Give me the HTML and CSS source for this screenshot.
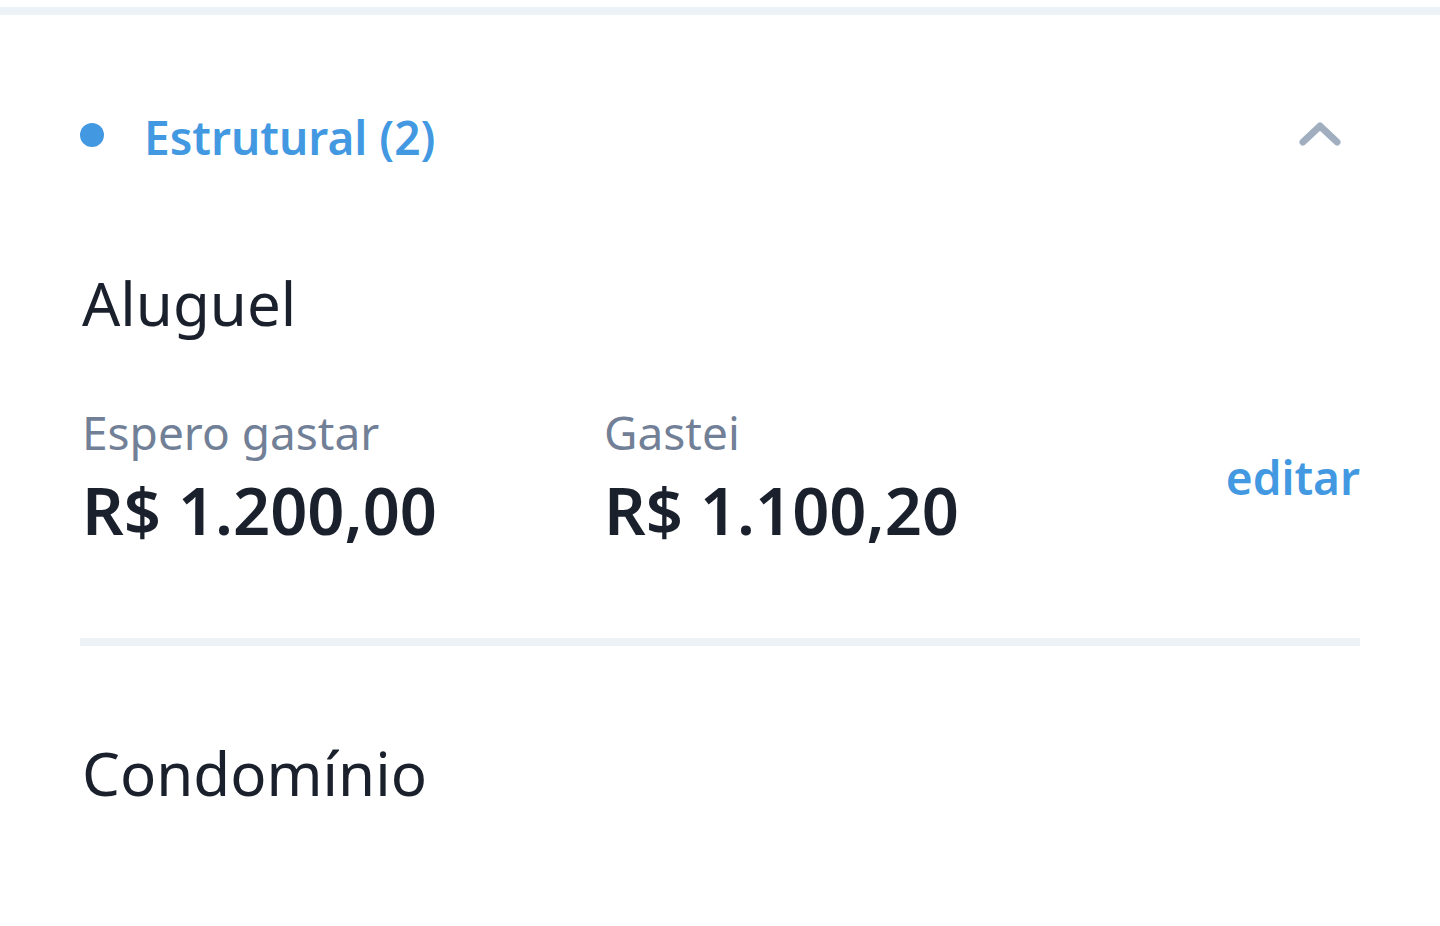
FILE: index.html
```html
<!DOCTYPE html>
<html lang="pt-BR">
<head>
<meta charset="utf-8">
<link rel="stylesheet" href="styles.css">
</head>
<body>
<div class="topbar"></div>
<section class="group">
  <div class="group-head">
    <span class="dot"></span>
    <span class="group-title">Estrutural (2)</span>
    <svg class="chevron" width="44" height="28" viewBox="0 0 44 28"><path d="M5 22 L22 6 L39 22" fill="none" stroke="#a0aec0" stroke-width="7" stroke-linecap="round" stroke-linejoin="round"/></svg>
  </div>
  <div class="item">
    <div class="item-name">Aluguel</div>
    <div class="item-values">
      <div class="val">
        <div class="val-label">Espero gastar</div>
        <div class="val-num">R$ 1.200,00</div>
      </div>
      <div class="val">
        <div class="val-label">Gastei</div>
        <div class="val-num">R$ 1.100,20</div>
      </div>
      <a class="edit">editar</a>
    </div>
  </div>
  <div class="divider"></div>
  <div class="item item-next">
    <div class="item-name">Condomínio</div>
  </div>
</section>
</body>
</html>
```
FILE: styles.css
```css
html, body {
  margin: 0;
  padding: 0;
  background: #ffffff;
  font-family: "Noto Sans", "Open Sans", sans-serif;
  overflow: hidden;
}
.topbar {
  margin-top: 7px;
  height: 8px;
  background: #edf2f7;
}
.group {
  padding: 0 80px;
}
.group-head {
  display: flex;
  align-items: center;
  height: 92px;
  padding-top: 76px;
}
.dot {
  width: 24px;
  height: 24px;
  border-radius: 50%;
  background: #4299e1;
  margin-right: 40px;
  margin-bottom: 4px;
}
.group-title {
  flex: 1;
  color: #4299e1;
  font-size: 46px;
  font-weight: 600;
  line-height: 1;
}
.chevron {
  margin-right: 18px;
  margin-bottom: 6px;
}
.item {
  padding-top: 90px;
}
.item-next {
  padding-top: 97px;
}
.item-name {
  font-size: 60px;
  line-height: 1;
  color: #1a202c;
  padding-left: 2px;
}
.item-values {
  display: flex;
  align-items: flex-end;
  margin-top: 76px;
  padding-left: 2px;
  padding-bottom: 95px;
}
.val {
  width: 522px;
}
.val-label {
  font-size: 46px;
  color: #718096;
  line-height: 1;
}
.val-num {
  font-size: 65px;
  font-weight: 600;
  color: #1a202c;
  line-height: 1;
  margin-top: 23px;
}
.edit {
  margin-left: auto;
  color: #4299e1;
  font-size: 46px;
  font-weight: 600;
  margin-bottom: 35px;
}
.divider {
  height: 8px;
  background: #edf2f7;
}
```
